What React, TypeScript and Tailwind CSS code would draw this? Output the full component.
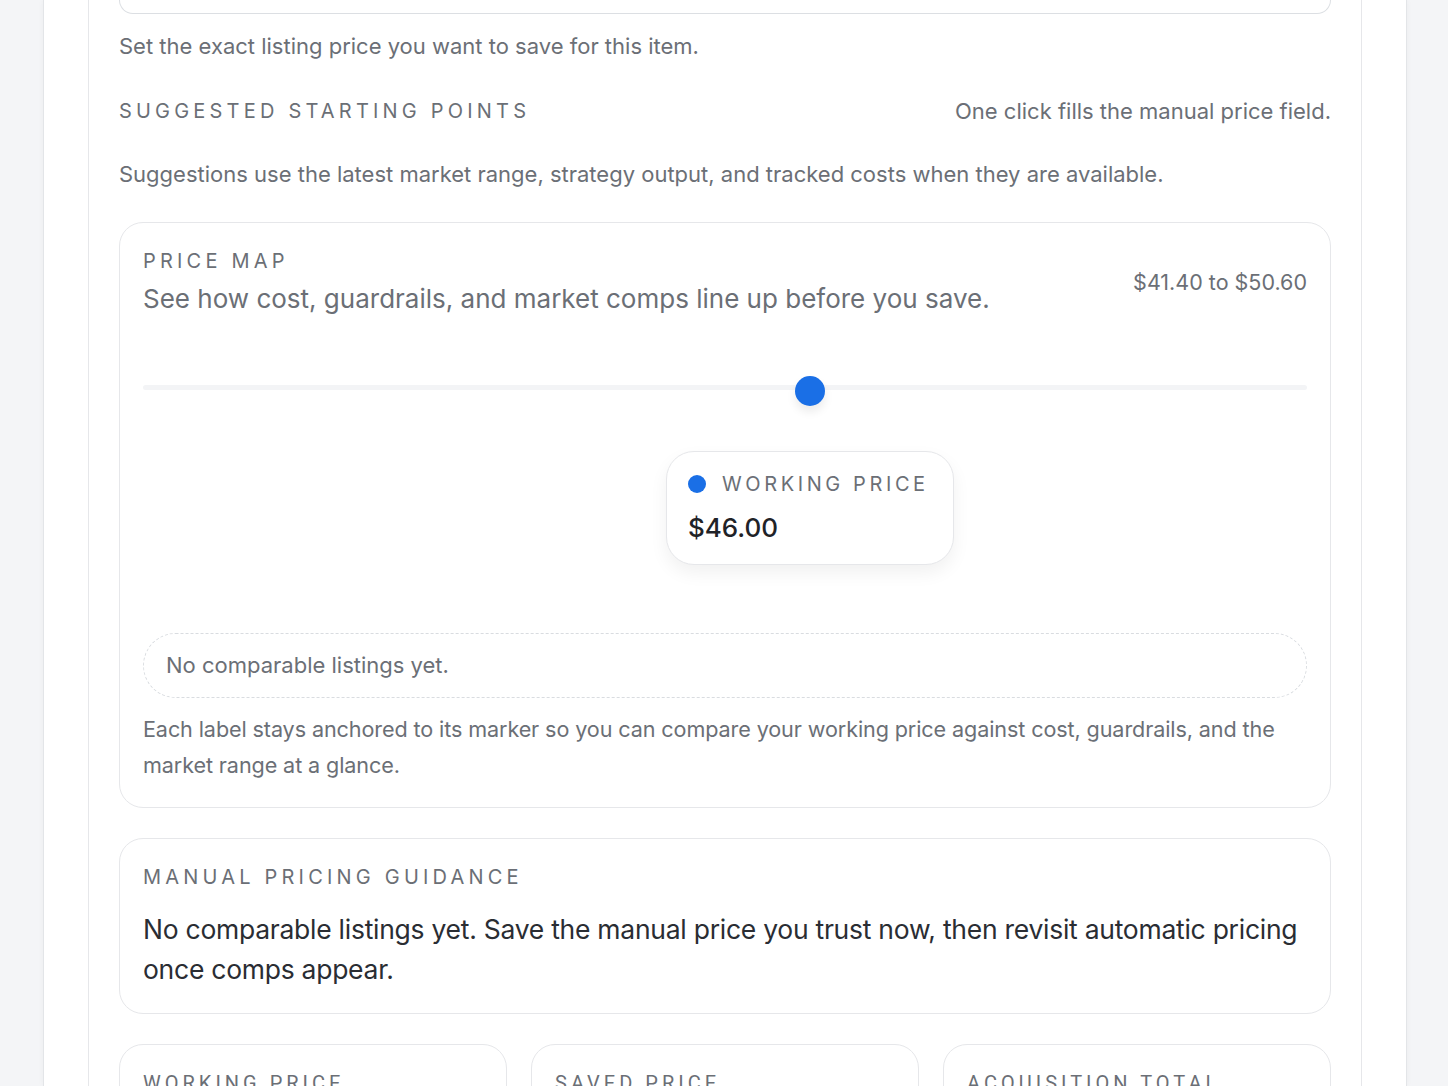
import React from "react";

const font = { fontFamily: "Inter, 'Noto Sans', sans-serif" };

function Eyebrow({ children }: { children: React.ReactNode }) {
  return (
    <div className="text-[20px] leading-[28px] tracking-[0.21em] text-[#6b6f76] uppercase">
      {children}
    </div>
  );
}

function PriceMap() {
  const pos = 57.3;
  return (
    <div className="mt-[34px] rounded-[24px] border border-[#e6e7ea] bg-white px-[23px] py-[24px]">
      <div className="flex items-center justify-between gap-6">
        <div>
          <Eyebrow>Price map</Eyebrow>
          <div className="mt-[6px] text-[26px] leading-[36px] text-[#6b6f76]">
            See how cost, guardrails, and market comps line up before you save.
          </div>
        </div>
        <div className="text-[21.5px] leading-[30px] text-[#6b6f76]">$41.40 to $50.60</div>
      </div>

      {/* marker canvas */}
      <div className="relative mt-[24px] h-[268px]">
        <div className="absolute left-0 right-0 top-[44px] h-[5px] rounded-full bg-[#f3f4f6]" />
        <div
          className="absolute top-[35px] h-[30px] w-[30px] -translate-x-1/2 rounded-full bg-[#1a6fe6] shadow-[0_6px_10px_rgba(0,0,0,0.08)]"
          style={{ left: `${pos}%` }}
        />
        <div
          className="absolute top-[110px] w-[288px] -translate-x-1/2 rounded-[28px] border border-[#e6e7ea] bg-white px-[21px] py-[18px] shadow-[0_8px_18px_rgba(0,0,0,0.06)]"
          style={{ left: `${pos}%` }}
        >
          <div className="flex items-center gap-[16px]">
            <span className="h-[18px] w-[18px] rounded-full bg-[#1a6fe6]" />
            <span className="text-[20px] leading-[28px] tracking-[0.18em] text-[#6b6f76]">WORKING PRICE</span>
          </div>
          <div className="mt-[12px] text-[26px] font-medium leading-[36px] text-[#1f2328]">$46.00</div>
        </div>
      </div>

      <div className="mt-[24px] flex h-[65px] items-center rounded-full border border-dashed border-[#d9dce0] px-[22px] text-[22px] text-[#6b6f76]">
        No comparable listings yet.
      </div>
      <p className="mt-[13px] text-[21.6px] leading-[36px] tracking-[-0.005em] text-[#6b6f76]">
        Each label stays anchored to its marker so you can compare your working price against cost, guardrails, and the
        market range at a glance.
      </p>
    </div>
  );
}

function StatCard({ label }: { label: string }) {
  return (
    <div className="h-[140px] rounded-[24px] border border-[#e6e7ea] bg-white px-[23px] py-[24px]">
      <div className="text-[20px] leading-[28px] tracking-[0.2em] text-[#6b6f76]" style={{ fontFamily: "Roboto, sans-serif" }}>
        {label}
      </div>
    </div>
  );
}

export default function App() {
  return (
    <div className="h-[1086px] overflow-hidden bg-[#f4f5f7] pl-[43px] pr-[41px]" style={font}>
      <div className="h-full border-x border-[#e3e5e8] bg-white px-[44px] shadow-[0_0_6px_rgba(0,0,0,0.04)]">
        <div className="h-full border-x border-[#e6e7ea] px-[30px]">
          <div className="h-[14px] rounded-b-[22px] border-x border-b border-[#dcdfe3]" />
          <p className="mt-[18px] text-[22px] leading-[28px] text-[#6b6f76]">
            Set the exact listing price you want to save for this item.
          </p>

          <div className="mt-[37px] flex items-center justify-between">
            <Eyebrow>Suggested starting points</Eyebrow>
            <span className="text-[22px] leading-[28px] text-[#6b6f76]">One click fills the manual price field.</span>
          </div>

          <p className="mt-[35px] text-[22px] leading-[28px] text-[#6b6f76]">
            Suggestions use the latest market range, strategy output, and tracked costs when they are available.
          </p>

          <PriceMap />

          <div className="mt-[30px] rounded-[24px] border border-[#e6e7ea] bg-white px-[23px] py-[24px]">
            <Eyebrow>Manual pricing guidance</Eyebrow>
            <p className="mt-[18px] text-[26.5px] leading-[40px] tracking-[-0.01em] text-[#2a2d33]">
              No comparable listings yet. Save the manual price you trust now, then revisit automatic pricing once comps
              appear.
            </p>
          </div>

          <div className="mt-[30px] grid grid-cols-3 gap-[24px]">
            <StatCard label="WORKING PRICE" />
            <StatCard label="SAVED PRICE" />
            <StatCard label="ACQUISITION TOTAL" />
          </div>
        </div>
      </div>
    </div>
  );
}
